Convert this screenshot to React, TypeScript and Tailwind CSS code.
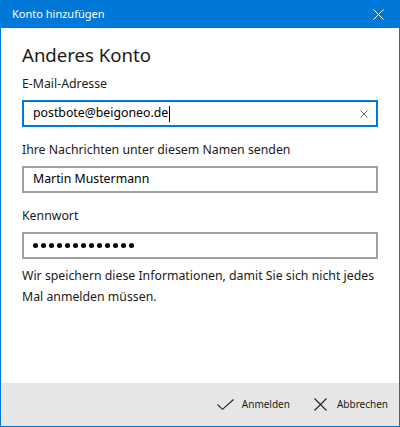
import React from "react";

const font = { fontFamily: '"Noto Sans", "Open Sans", sans-serif' };

const Field: React.FC<{ focused?: boolean; children: React.ReactNode }> = ({
  focused,
  children,
}) => (
  <div
    className={`flex h-[27px] items-center border-2 bg-white pl-[9px] pr-[8px] text-[12.3px] text-[#000] ${
      focused ? "border-[#0078d7]" : "border-[#a0a0a0]"
    }`}
  >
    {children}
  </div>
);

export default function App() {
  return (
    <div
      className="flex h-[427px] w-[400px] flex-col border-x border-b border-[#0078d7] bg-white"
      style={font}
    >
      {/* Titelleiste */}
      <div className="flex h-[28px] shrink-0 items-center justify-between bg-[#0078d7] pl-[11px] pr-[15px] text-[11px] text-white">
        <span>Konto hinzufügen</span>
        <svg width="11" height="11" viewBox="0 0 11 11" stroke="white" strokeWidth="1">
          <path d="M0.5 0.5L10.5 10.5M10.5 0.5L0.5 10.5" />
        </svg>
      </div>

      {/* Inhalt */}
      <div className="flex flex-1 flex-col px-[21px] pt-[14px] text-[#1a1a1a]">
        <h1 className="text-[18.6px] leading-[26px]">Anderes Konto</h1>
        <div className="mt-[6px] text-[12.3px] leading-[20px]">E-Mail-Adresse</div>
        <div className="mt-[6px]">
          <Field focused>
            <span>postbote@beigoneo.de</span>
            <span className="ml-px h-[16px] w-px bg-black" />
            <span className="flex-1" />
            <svg width="8" height="8" viewBox="0 0 8 8" stroke="#555" strokeWidth="0.9">
              <path d="M0.5 0.5L7.5 7.5M7.5 0.5L0.5 7.5" />
            </svg>
          </Field>
        </div>
        <div className="mt-[13px] text-[12.3px] leading-[20px]">
          Ihre Nachrichten unter diesem Namen senden
        </div>
        <div className="mt-[6px]">
          <Field>Martin Mustermann</Field>
        </div>
        <div className="mt-[13px] text-[12.3px] leading-[20px]">Kennwort</div>
        <div className="mt-[6px]">
          <Field>
            <span className="flex gap-[3px]">
              {Array.from({ length: 13 }).map((_, i) => (
                <span key={i} className="h-[5px] w-[5px] rounded-full bg-black" />
              ))}
            </span>
          </Field>
        </div>
        <p className="mt-[6px] text-[12.3px] leading-[21px]">
          Wir speichern diese Informationen, damit Sie sich nicht jedes Mal
          anmelden müssen.
        </p>
      </div>

      {/* Fußleiste */}
      <div className="flex h-[43px] shrink-0 items-center justify-end gap-[24px] bg-[#e6e6e6] pr-[11px] text-[10px] text-[#1a1a1a]">
        <button className="flex items-center gap-[8px]">
          <svg width="17" height="11" viewBox="0 0 17 11" fill="none" stroke="#222" strokeWidth="1.1">
            <path d="M0.5 5.5L5.5 10.3L16.5 0.5" />
          </svg>
          <span>Anmelden</span>
        </button>
        <button className="flex items-center gap-[10px]">
          <svg width="13" height="13" viewBox="0 0 13 13" fill="none" stroke="#222" strokeWidth="1.1">
            <path d="M0.5 0.5L12.5 12.5M12.5 0.5L0.5 12.5" />
          </svg>
          <span>Abbrechen</span>
        </button>
      </div>
    </div>
  );
}
